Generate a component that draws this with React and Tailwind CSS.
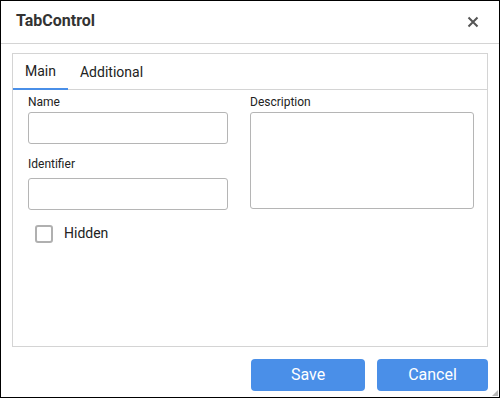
export default function App() {
  return (
    <div className="relative flex h-[398px] w-[500px] flex-col border border-black bg-white font-['Roboto',sans-serif] text-[#222]">
      {/* header */}
      <div className="flex h-[43px] shrink-0 items-center justify-between border-b border-[#d4d4d4] pb-[2px] pl-[15px] pr-[20px]">
        <span className="text-[16px] font-bold text-[#333]">TabControl</span>
        <svg width="12" height="12" viewBox="0 0 12 12" className="mt-[2px]">
          <path d="M1.5 1.5 L10.5 10.5 M10.5 1.5 L1.5 10.5" stroke="#555" strokeWidth="2" />
        </svg>
      </div>

      <div className="flex flex-1 flex-col px-[11px] pt-[9px]">
        <div className="flex h-[294px] flex-col border border-[#d4d4d4]">
          {/* tabs */}
          <div className="flex h-[36px] shrink-0 border-b border-[#d4d4d4] text-[14px]">
            <div className="-mb-px flex items-center border-b-2 border-[#4a8fe8] px-[12px] pt-[1px]">Main</div>
            <div className="flex items-center px-[12px] pt-[1px]">Additional</div>
          </div>

          <div className="grid grid-cols-[200px_224px] gap-x-[22px] pl-[15px] pt-[4px] text-[12px]">
            <div className="flex flex-col">
              <label className="mb-[2px] leading-[16px]">Name</label>
              <input className="h-[32px] rounded-[3px] border border-[#b5b5b5] outline-none" />
              <label className="mb-[6px] mt-[12px] leading-[16px]">Identifier</label>
              <input className="h-[32px] rounded-[3px] border border-[#b5b5b5] outline-none" />
              <label className="ml-[7px] mt-[13px] flex items-center gap-[11px] text-[14px]">
                <span className="h-[18px] w-[18px] rounded-[3px] border-2 border-[#b0b0b0]" />
                Hidden
              </label>
            </div>
            <div className="flex flex-col">
              <label className="mb-[2px] leading-[16px]">Description</label>
              <textarea className="h-[97px] resize-none rounded-[3px] border border-[#b5b5b5] outline-none" />
            </div>
          </div>
        </div>

        {/* buttons */}
        <div className="mt-[12px] flex justify-end gap-[12px] text-[16px] text-white">
          <button className="h-[32px] w-[114px] rounded-[4px] bg-[#4a8fe8]">Save</button>
          <button className="h-[32px] w-[111px] rounded-[4px] bg-[#4a8fe8]">Cancel</button>
        </div>
      </div>

      {/* resize grip */}
      <svg width="6" height="6" viewBox="0 0 6 6" className="absolute bottom-[1px] right-[1px]">
        <path d="M6 0 L6 6 L0 6 Z" fill="#b8b8b8" />
      </svg>
    </div>
  )
}
